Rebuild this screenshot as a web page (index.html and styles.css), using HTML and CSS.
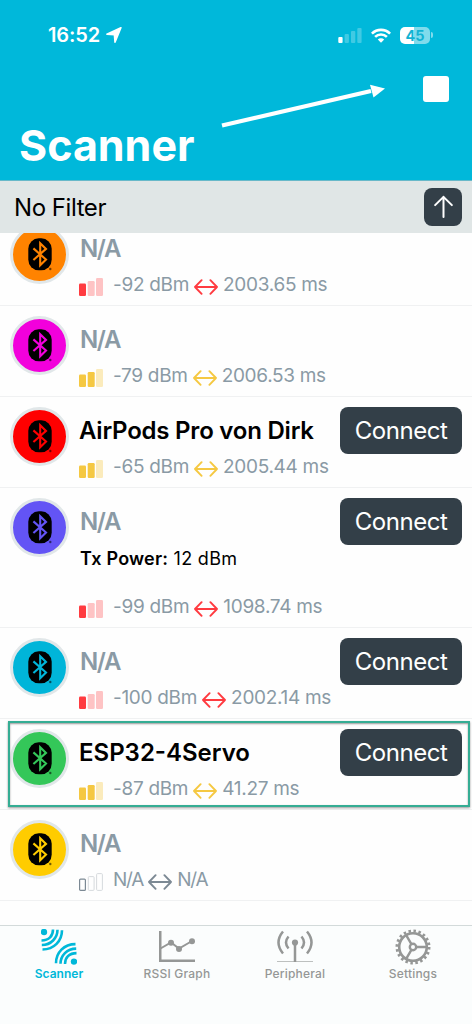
FILE: index.html
```
<!DOCTYPE html>
<html lang="en">
<head>
<meta charset="utf-8">
<title>Scanner</title>
<link rel="stylesheet" href="styles.css">
</head>
<body>
<svg class="defs" aria-hidden="true">
  <symbol id="bt" viewBox="0 0 24 33">
    <rect x=".3" y=".3" width="23.4" height="32" rx="10.5" fill="#000"/>
    <path d="M5.4 10.400 18 21.500 12.200 27.200V5.200L18 10.900 5.400 22" fill="none" stroke="currentColor" stroke-width="2.100"/>
    <circle cx="22.3" cy="31" r="1.200" fill="#000" opacity=".55"/>
  </symbol>
  <symbol id="bars1" viewBox="0 0 24 18">
    <rect x="0" y="5.5" width="7" height="12.5" rx="1.2"/><rect x="8.7" y="3" width="7" height="15" rx="1.2" opacity=".3"/><rect x="17" y="0" width="7" height="18" rx="1.2" opacity=".3"/>
  </symbol>
  <symbol id="bars2" viewBox="0 0 24 18">
    <rect x="0" y="5.5" width="7" height="12.5" rx="1.2"/><rect x="8.7" y="3" width="7" height="15" rx="1.2"/><rect x="17" y="0" width="7" height="18" rx="1.2" opacity=".35"/>
  </symbol>
  <symbol id="bars0" viewBox="0 0 24 18">
    <g fill="none" stroke="currentColor"><rect x=".6" y="6.1" width="5.8" height="11.3" rx="1" stroke-width="1.2"/><g opacity=".3"><rect x="9.3" y="3.6" width="5.8" height="13.8" rx="1"/><rect x="17.6" y=".6" width="5.8" height="16.8" rx="1"/></g></g>
  </symbol>
  <symbol id="lr" viewBox="0 0 24 16">
    <path d="M1 8H23M7.6 1.2 1 8l6.6 6.8M16.4 1.2 23 8l-6.6 6.8" fill="none" stroke="currentColor" stroke-width="1.9" stroke-linecap="round" stroke-linejoin="round"/>
  </symbol>
</svg>
<div class="screen">
  <header class="header">
    <div class="status">
      <span class="time">16:52</span>
      <svg class="loc" viewBox="0 0 16 16"><path d="M14.900.8.9 7.200 8.400 7.800 9 15.200Z" fill="#fff" stroke="#fff" stroke-width="1.600" stroke-linejoin="round"/></svg>
      <svg class="cell" viewBox="0 0 24 16" fill="#fff"><rect x=".3" y="10" width="4.300" height="6" rx="1"/><g opacity=".25"><rect x="6.600" y="7" width="4.300" height="9" rx="1"/><rect x="13" y="4" width="4.300" height="12" rx="1"/><rect x="19.300" y="1" width="4.300" height="15" rx="1"/></g></svg>
      <svg class="wifi" viewBox="0 0 20 15" fill="none" stroke="#fff" stroke-width="2.600"><path d="M.9 5.600a13 13 0 0 1 18.200 0M4.100 8.900a8.400 8.400 0 0 1 11.800 0"/><path d="M10 14.700 6.800 11.600a4.600 4.600 0 0 1 6.400 0Z" fill="#fff" stroke="none"/></svg>
      <span class="battery">45</span><span class="nub"></span>
    </div>
    <div class="actions">
      <svg class="pointer" viewBox="0 0 164 44"><path d="M1 40.500 150 6" stroke="#fff" stroke-width="4.200"/><path d="m149-.2 15 3.800-11.500 9Z" fill="#fff"/></svg>
      <span class="stop"></span>
    </div>
    <h1>Scanner</h1>
  </header>
  <div class="filter">
    <span class="filter-name">No Filter</span>
    <span class="sort"><svg viewBox="0 0 20 24"><path d="M10 22.500V1.300M1.200 10 10 1.300 18.800 10" fill="none" stroke="#fff" stroke-width="2.100" stroke-linecap="round" stroke-linejoin="round"/></svg></span>
  </div>
  <main class="viewport"><div class="list">
    <article class="row orange">
      <span class="avatar"><svg><use href="#bt"/></svg></span>
      <div class="info"><h2 class="dim">N/A</h2><p class="meta red"><svg class="bars"><use href="#bars1"/></svg><span class="rssi">-92 dBm</span><svg class="lr"><use href="#lr"/></svg><span>2003.65 ms</span></p></div>
    </article>
    <article class="row magenta">
      <span class="avatar"><svg><use href="#bt"/></svg></span>
      <div class="info"><h2 class="dim">N/A</h2><p class="meta yellow"><svg class="bars"><use href="#bars2"/></svg><span class="rssi">-79 dBm</span><svg class="lr"><use href="#lr"/></svg><span>2006.53 ms</span></p></div>
    </article>
    <article class="row crimson">
      <span class="avatar"><svg><use href="#bt"/></svg></span>
      <div class="info"><h2>AirPods Pro von Dirk</h2><p class="meta yellow"><svg class="bars"><use href="#bars2"/></svg><span class="rssi">-65 dBm</span><svg class="lr"><use href="#lr"/></svg><span>2005.44 ms</span></p></div>
      <span class="connect">Connect</span>
    </article>
    <article class="row violet tall">
      <span class="avatar"><svg><use href="#bt"/></svg></span>
      <div class="info"><h2 class="dim">N/A</h2><p class="tx"><b>Tx Power:</b> 12 dBm</p><p class="meta red"><svg class="bars"><use href="#bars1"/></svg><span class="rssi">-99 dBm</span><svg class="lr"><use href="#lr"/></svg><span>1098.74 ms</span></p></div>
      <span class="connect">Connect</span>
    </article>
    <article class="row cyan">
      <span class="avatar"><svg><use href="#bt"/></svg></span>
      <div class="info"><h2 class="dim">N/A</h2><p class="meta red"><svg class="bars"><use href="#bars1"/></svg><span class="rssi">-100 dBm</span><svg class="lr"><use href="#lr"/></svg><span>2002.14 ms</span></p></div>
      <span class="connect">Connect</span>
    </article>
    <article class="row green marked">
      <span class="avatar"><svg><use href="#bt"/></svg></span>
      <div class="info"><h2 class="loose">ESP32-4Servo</h2><p class="meta yellow"><svg class="bars"><use href="#bars2"/></svg><span class="rssi">-87 dBm</span><svg class="lr"><use href="#lr"/></svg><span>41.27 ms</span></p></div>
      <span class="connect">Connect</span>
    </article>
    <article class="row amber">
      <span class="avatar"><svg><use href="#bt"/></svg></span>
      <div class="info"><h2 class="dim">N/A</h2><p class="meta grey"><svg class="bars"><use href="#bars0"/></svg><span class="rssi">N/A</span><svg class="lr"><use href="#lr"/></svg><span>N/A</span></p></div>
    </article>
  </div></main>
  <nav class="tabs">
    <a class="tab active"><svg viewBox="0 0 36 36"><g id="waves"><circle cx="3" cy="3" r="3.200" fill="currentColor"/><path d="M12 .5C12 7 8 11.500.5 11.500M16.500.8C16.500 9 10 16 .8 16M21 1.300C21 12 13 20.500 1.500 20.500" fill="none" stroke="currentColor" stroke-width="2.600"/></g><use href="#waves" transform="rotate(180 18 17.800)"/></svg>Scanner</a>
    <a class="tab"><svg viewBox="0 0 36 36" fill="none" stroke="currentColor"><path d="M1.200 2V31.800H36" stroke-width="2.600"/><path d="M1.500 19.500 12 13.500l8 6L33 12" stroke-width="2"/><g fill="currentColor" stroke="none"><circle cx="12" cy="13.700" r="3"/><circle cx="20" cy="20" r="3"/><circle cx="33" cy="12.300" r="3"/></g></svg>RSSI Graph</a>
    <a class="tab"><svg viewBox="0 0 36 36" fill="none" stroke="currentColor"><path d="M0 32.500H36" stroke-width="1" opacity=".6"/><path d="M18 13.500V33" stroke-width="2.500"/><circle cx="18" cy="13.500" r="3.100" fill="currentColor" stroke="none"/><path d="M11.500 7.500q-5 6 0 12M24.500 7.500q5 6 0 12M6 2.500q-9 11 0 22M30 2.500q9 11 0 22" stroke-width="2.500"/></svg>Peripheral</a>
    <a class="tab"><svg viewBox="0 0 36 36" fill="none" stroke="currentColor"><circle cx="18" cy="18" r="13.800" stroke-width="2.600"/><circle cx="18" cy="18" r="16" stroke-width="3" stroke-dasharray="2.500 2.526"/><circle cx="18" cy="18" r="3.200" stroke-width="2.400"/><path d="M21.200 18H32M16.400 15.200 11 5.900M16.400 20.800 11 30.100" stroke-width="2.400"/></svg>Settings</a>
  </nav>
</div>
</body>
</html>
```
FILE: styles.css
```
*, *::after { box-sizing: border-box; }
body { margin: 0; background: #fefefe; font-family: Inter, "Liberation Sans", sans-serif; color: #000; }
h1, h2, p { margin: 0; }
svg { flex: none; }
.defs { display: none; }
.screen { width: 472px; height: 1024px; display: flex; flex-direction: column; overflow: hidden; }

.header { height: 181px; background: #00b8da; color: #fff; border-bottom: 1px solid #68b9c9; flex: none; }
.status { height: 70px; padding: 0 39px 0 48px; display: flex; align-items: center; }
.time { font-size: 20px; font-weight: 600; letter-spacing: -.1px; width: 58px; }
.loc { width: 16px; height: 16px; }
.cell { width: 24px; height: 16px; margin-left: auto; }
.wifi { width: 20px; height: 15px; margin-left: 9px; }
.battery { width: 30px; height: 17px; margin-left: 9px; border-radius: 5px; background: linear-gradient(90deg, #fff 47%, #80dbec 47%); color: #12b3d3; font-size: 14.5px; line-height: 17px; font-weight: 700; text-align: center; }
.nub { width: 2px; height: 6px; margin-left: 1px; border-radius: 0 3px 3px 0; background: #80dbec; }
.actions { height: 49px; padding: 6px 23px 0 221px; display: flex; justify-content: space-between; align-items: flex-start; }
.pointer { width: 164px; height: 44px; margin-top: 9px; overflow: visible; }
.stop { width: 26px; height: 26px; border-radius: 3px; background: #fff; }
h1 { padding-left: 19px; font-size: 43px; line-height: 52px; font-weight: 700; }

.filter { height: 52px; flex: none; display: flex; align-items: center; justify-content: space-between; padding: 0 10px 0 14px; background: #e0e6e6; font-size: 24px; }
.filter-name { letter-spacing: -.45px; }
.sort { width: 38px; height: 38px; border-radius: 8px; background: #333f48; display: grid; place-items: center; }
.sort svg { width: 19px; height: 24px; }

.viewport { height: 692px; flex: none; overflow: hidden; }
.list { margin-top: -18px; }
.row { position: relative; height: 91px; padding-left: 10px; display: flex; align-items: flex-start; border-bottom: 1px solid #f0f1f2; color: var(--tone); }
.tall { height: 140px; }
.orange { --tone: #ff8300; }
.magenta { --tone: #f200dc; }
.crimson { --tone: #ff0000; }
.violet { --tone: #6354f5; }
.cyan { --tone: #00b5d9; }
.green { --tone: #34c759; }
.amber { --tone: #ffcc00; }
.avatar { width: 59px; height: 59px; margin-top: 10px; border: 3px solid #e1e7e9; border-radius: 50%; background: var(--tone); display: grid; place-items: center; flex: none; }
.avatar svg { width: 24px; height: 33px; }
.info { width: 262px; height: 100%; padding: 19px 0 10px 10px; display: flex; flex-direction: column; flex: none; color: #000; }
h2 { font-size: 24px; line-height: 30px; font-weight: 600; letter-spacing: -.22px; white-space: nowrap; }
.loose { letter-spacing: 0; }
.dim { color: #8a9aa5; padding-left: 1px; letter-spacing: -1.4px; }
.meta { margin-top: auto; height: 22px; display: flex; align-items: center; font-size: 19px; letter-spacing: -.3px; white-space: nowrap; color: var(--signal); }
.meta span { color: #8a9aa5; }
.red { --signal: #ff3b40; }
.yellow { --signal: #f5c842; }
.grey { --signal: #7c8994; letter-spacing: -1.2px; }
.bars { width: 24px; height: 18px; margin: 6px 10px 0 0; fill: currentColor; }
.lr { width: 24px; height: 16px; margin: 5px 5px 0 5px; }
.tx { font-size: 18px; line-height: 24px; margin-top: 10px; padding-left: 1px; letter-spacing: .3px; }
.tx b { font-weight: 600; letter-spacing: .2px; }
.connect { width: 122px; height: 47px; margin: 10px 0 0 9px; border-radius: 8px; background: #333f48; color: #fff; font-size: 24px; line-height: 47px; letter-spacing: -.45px; text-align: center; }
/* selection frame laid over the device row */
.marked::after { content: ""; position: absolute; left: 8px; top: 2px; width: 462px; height: 86px; border: 2px solid #35ad94; box-shadow: 0 1px 2px #0006, inset 0 1px 2px #0006; }

.tabs { flex: 1; display: grid; grid-template-columns: repeat(4, 118px); border-top: 1px solid #d3dada; background: #fbfdfd; color: #959796; }
.tab { display: flex; flex-direction: column; align-items: center; padding-top: 3px; font-size: 12px; line-height: 18px; font-weight: 500; letter-spacing: .2px; }
.tab svg { width: 36px; height: 36px; }
.active { color: #00b8d9; font-weight: 600; letter-spacing: 0; }
```
